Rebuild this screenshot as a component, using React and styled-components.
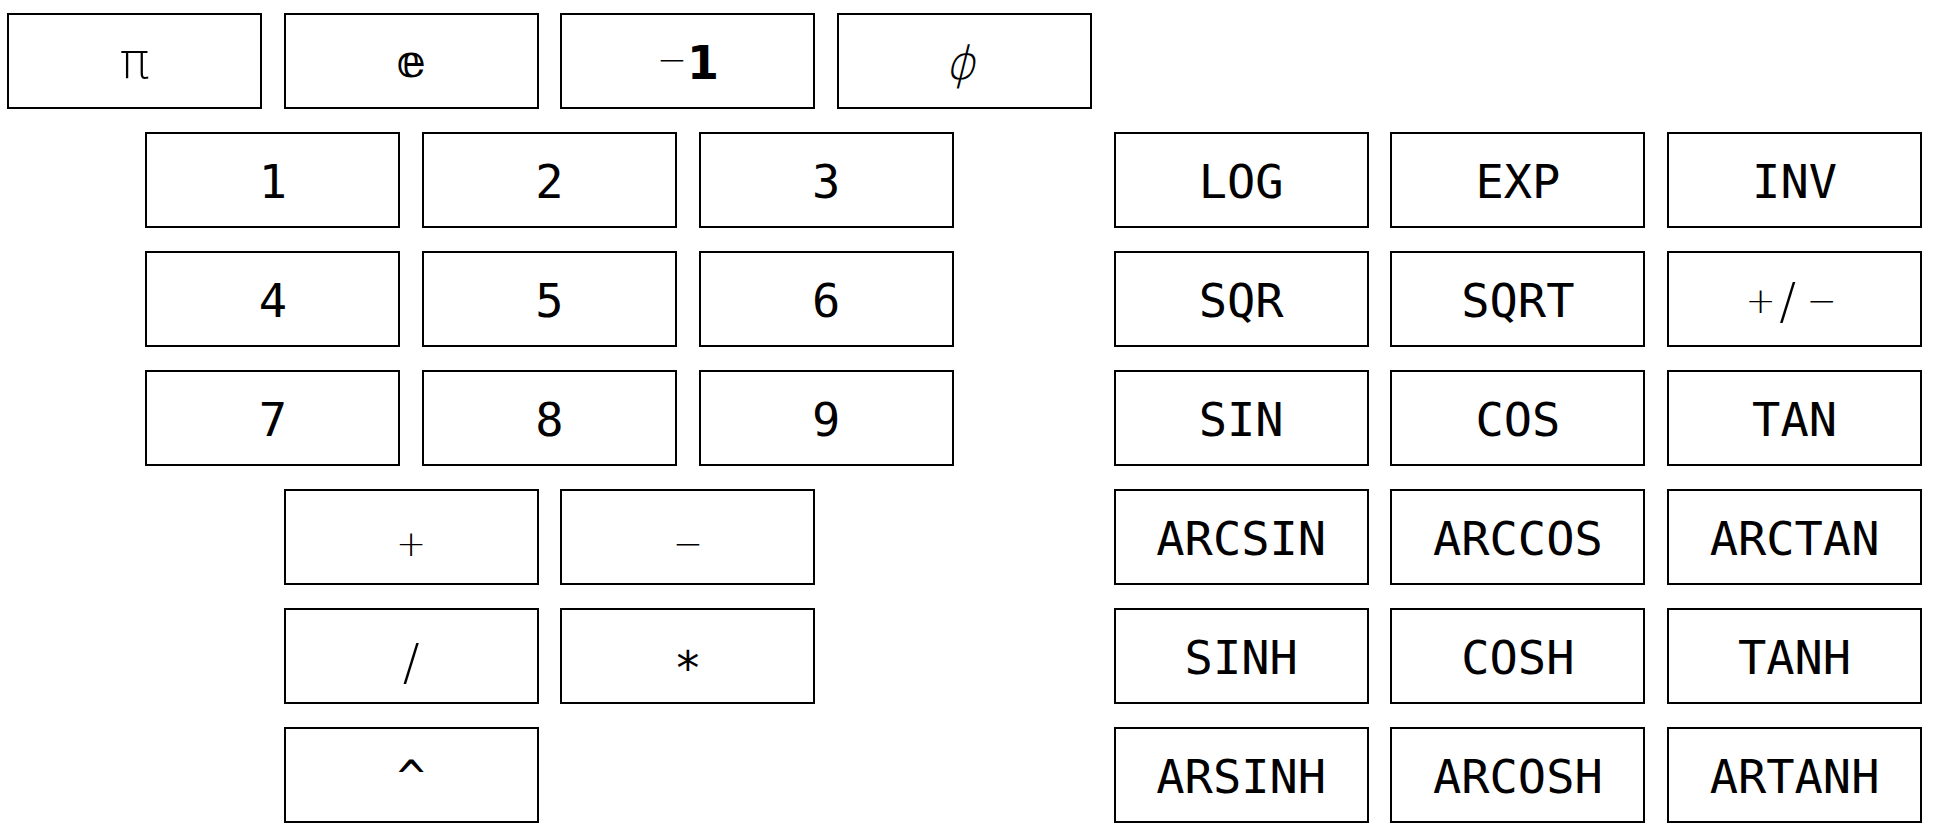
import styled, { createGlobalStyle } from "styled-components";

const GlobalStyle = createGlobalStyle`
  html, body {
    margin: 0;
    padding: 0;
    background: #fff;
  }
  body {
    font-family: "DejaVu Sans Mono", monospace;
  }
`;

const Page = styled.div`
  display: flex;
  align-items: flex-start;
  gap: 21.7px;
  padding: 13px 0 0 7px;
`;

const LeftPanel = styled.div`
  display: flex;
  flex-direction: column;
  align-items: center;
  gap: 23px;
  width: 1085px;
`;

const Row = styled.div`
  display: flex;
  gap: 21.7px;
`;

const OpGrid = styled.div`
  display: grid;
  grid-template-columns: repeat(2, 255px);
  gap: 23px 21.7px;
`;

const RightPanel = styled.div`
  display: grid;
  grid-template-columns: repeat(3, 255px);
  gap: 23px 21.7px;
  margin-top: 119px;
`;

const Key = styled.button`
  width: 255px;
  height: 96px;
  box-sizing: border-box;
  margin: 0;
  padding: 3px 0 0;
  border: 2px solid #000;
  border-radius: 0;
  background: #fff;
  color: #000;
  display: flex;
  align-items: center;
  justify-content: center;
  font-family: "DejaVu Sans Mono", monospace;
  font-size: 47px;
  line-height: 1;
  cursor: pointer;
`;

// thin math glyphs (the reference falls back to a light math font for these)
const Thin = styled.span`
  display: inline-block;
  width: ${(p) => (p.$cell ? `${p.$cell}px` : "auto")};
  text-align: center;
  font-family: "DejaVu Sans", "DejaVu Serif", sans-serif;
  font-weight: 200;
  font-size: ${(p) => p.$size || 36}px;
  transform: translateY(${(p) => p.$dy || 0}px)
    skewX(${(p) => (p.$slant ? -14 : 0)}deg);
`;

const Bold = styled.span`
  font-family: "DejaVu Sans", sans-serif;
  font-weight: 700;
  font-size: 46px;
`;

const Star = styled.span`
  font-size: 46px;
  transform: translateY(10px);
`;

const constants = [
  { id: "pi", label: <Thin $size={50} $dy={-2}>π</Thin> },
  { id: "e", label: <Thin $size={46} $dy={-2}>𝕖</Thin> },
  {
    id: "neg",
    label: (
      <>
        <Thin $size={36} $dy={-3}>−</Thin>
        <Bold>1</Bold>
      </>
    ),
  },
  { id: "phi", label: <Thin $size={46} $slant>ϕ</Thin> },
];

const digits = [
  ["1", "2", "3"],
  ["4", "5", "6"],
  ["7", "8", "9"],
];

const operators = [
  { id: "add", label: <Thin $dy={5}>+</Thin> },
  { id: "sub", label: <Thin $dy={5}>−</Thin> },
  { id: "div", label: <Thin $size={50} $dy={4}>/</Thin> },
  { id: "mul", label: <Star>*</Star> },
  { id: "pow", label: "^" },
];

const functions = [
  "LOG",
  "EXP",
  "INV",
  "SQR",
  "SQRT",
  "+/-",
  "SIN",
  "COS",
  "TAN",
  "ARCSIN",
  "ARCCOS",
  "ARCTAN",
  "SINH",
  "COSH",
  "TANH",
  "ARSINH",
  "ARCOSH",
  "ARTANH",
];

const SignLabel = () => (
  <>
    <Thin $cell={30}>+</Thin>
    <Thin $cell={24} $size={50}>/</Thin>
    <Thin $cell={44}>−</Thin>
  </>
);

const App = () => {
  return (
    <>
      <GlobalStyle />
      <Page>
        <LeftPanel>
          <Row>
            {constants.map((c) => (
              <Key key={c.id}>{c.label}</Key>
            ))}
          </Row>
          {digits.map((row) => (
            <Row key={row[0]}>
              {row.map((d) => (
                <Key key={d}>{d}</Key>
              ))}
            </Row>
          ))}
          <OpGrid>
            {operators.map((op) => (
              <Key key={op.id}>{op.label}</Key>
            ))}
          </OpGrid>
        </LeftPanel>

        <RightPanel>
          {functions.map((f) => (
            <Key key={f}>{f === "+/-" ? <SignLabel /> : f}</Key>
          ))}
        </RightPanel>
      </Page>
    </>
  );
};

export default App;
